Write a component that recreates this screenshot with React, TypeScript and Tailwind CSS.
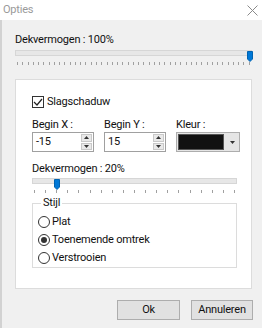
import React from "react";

function Thumb() {
  return (
    <svg width="6" height="11" viewBox="0 0 6 11" className="block">
      <path d="M0.5 0.5 H5.5 V8 L3 10.5 L0.5 8 Z" fill="#0078d7" stroke="#0063b1" strokeWidth="1" />
    </svg>
  );
}

function Slider({ ticks, pos }: { ticks: number; pos: number }) {
  return (
    <div className="relative h-[18px]">
      <div className="mt-[2px] h-[6px] border border-[#d6d6d6] bg-[#e7e7e7]" />
      <div className="absolute top-[1px]" style={{ left: pos }}>
        <Thumb />
      </div>
      <div className="mt-[6px] flex justify-between px-[2px]">
        {Array.from({ length: ticks }).map((_, i) => (
          <div key={i} className="w-px h-[3px] bg-[#a0a0a0]" />
        ))}
      </div>
    </div>
  );
}

function Spin({ value }: { value: string }) {
  return (
    <div className="flex h-[20px] w-[62px] border border-[#a0a0a0] bg-white">
      <div className="flex-1 pl-[3px] leading-[18px]">{value}</div>
      <div className="flex flex-col w-[11px] my-[1px] mr-[1px] gap-px">
        <div className="flex-1 bg-[#e9e9e9] border border-[#c9c9c9] flex items-center justify-center">
          <svg width="5" height="3" viewBox="0 0 5 3"><path d="M0 3 L2.5 0 L5 3 Z" fill="#333" /></svg>
        </div>
        <div className="flex-1 bg-[#e9e9e9] border border-[#c9c9c9] flex items-center justify-center">
          <svg width="5" height="3" viewBox="0 0 5 3"><path d="M0 0 L2.5 3 L5 0 Z" fill="#333" /></svg>
        </div>
      </div>
    </div>
  );
}

function Radio({ label, checked }: { label: string; checked?: boolean }) {
  return (
    <div className="flex items-center h-[18px] gap-[2px]">
      <div className="w-[12px] h-[12px] rounded-full border border-[#333] bg-white flex items-center justify-center">
        {checked && <div className="w-[6px] h-[6px] rounded-full bg-[#333]" />}
      </div>
      <span>{label}</span>
    </div>
  );
}

export default function App() {
  return (
    <div className="w-[262px] h-[328px] bg-[#f0f0f0] font-[Roboto,sans-serif] text-[11px] tracking-[-0.2px] text-[#111] flex flex-col overflow-hidden">
      {/* TITLE BAR */}
      <div className="h-[20px] bg-white flex items-center justify-between pl-[3px] pr-[4px] text-[#9a9a9a]">
        <span>Opties</span>
        <svg width="11" height="11" viewBox="0 0 11 11">
          <path d="M0.5 0.5 L10.5 10.5 M10.5 0.5 L0.5 10.5" stroke="#8a8a8a" strokeWidth="1" />
        </svg>
      </div>

      <div className="flex-1 border-l-2 border-[#d2d2d2] pl-[13px] pr-[10px] pt-[12px]">
        <div className="leading-[16px]">Dekvermogen : 100%</div>
        <Slider ticks={45} pos={232} />

        {/* PANEL */}
        <div className="mt-[11px] h-[210px] bg-white border border-[#dcdcdc] pl-[16px] pr-[14px] pt-[14px]">
          <div className="flex items-center h-[16px] gap-[3px]">
            <div className="w-[12px] h-[12px] border border-[#333] flex items-center justify-center">
              <svg width="10" height="8" viewBox="0 0 10 8">
                <path d="M1 4 L4 7 L9 1" fill="none" stroke="#222" strokeWidth="1.2" />
              </svg>
            </div>
            <span>Slagschaduw</span>
          </div>

          <div className="mt-[8px] flex gap-[10px]">
            <div>
              <div className="leading-[14px]">Begin X :</div>
              <Spin value="-15" />
            </div>
            <div>
              <div className="leading-[14px]">Begin Y :</div>
              <Spin value="15" />
            </div>
            <div>
              <div className="leading-[14px]">Kleur :</div>
              <div className="flex h-[20px] w-[64px] border border-[#adadad] bg-[#e5e5e5]">
                <div className="flex-1 m-[1px] bg-[#111] border border-[#555]" />
                <div className="w-[14px] flex items-center justify-center">
                  <svg width="5" height="3" viewBox="0 0 5 3"><path d="M0 0 L2.5 3 L5 0 Z" fill="#333" /></svg>
                </div>
              </div>
            </div>
          </div>

          <div className="mt-[10px] leading-[14px]">Dekvermogen : 20%</div>
          <div className="w-[205px]">
            <Slider ticks={19} pos={22} />
          </div>

          <fieldset className="w-[205px] border border-[#dcdcdc] pl-[5px]">
            <legend className="ml-[3px] px-[2px] leading-[14px]">Stijl</legend>
            <div className="pt-[3px]">
              <Radio label="Plat" />
              <Radio label="Toenemende omtrek" checked />
              <Radio label="Verstrooien" />
            </div>
          </fieldset>
        </div>

        {/* BUTTONS */}
        <div className="mt-[11px] flex justify-end gap-[11px]">
          <button className="w-[63px] h-[20px] bg-[#e1e1e1] border border-[#adadad] leading-[18px]">Ok</button>
          <button className="w-[62px] h-[20px] bg-[#e1e1e1] border border-[#adadad] leading-[18px] -mr-[1px]">Annuleren</button>
        </div>
      </div>
    </div>
  );
}
